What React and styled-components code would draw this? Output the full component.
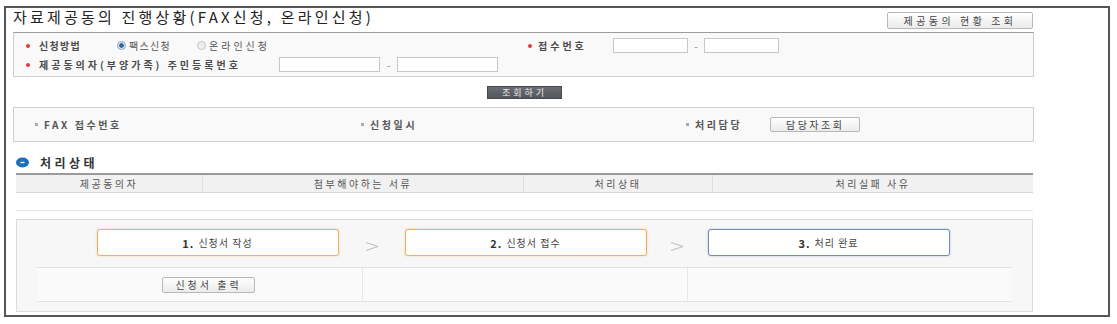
import React from 'react';
import styled, { createGlobalStyle } from 'styled-components';

const GlobalStyle = createGlobalStyle`
  html, body { margin: 0; padding: 0; background: #fff; }
  body { font-family: "Noto Sans CJK KR", "Noto Sans", sans-serif; color: #444; }
  * { box-sizing: border-box; }
`;

const Page = styled.div`
  padding: 6px 0 0 4px;
`;

const Frame = styled.div`
  width: 1106px;
  height: 311px;
  border: 2px solid #555;
  padding: 0 74px 0 7px;
  display: flex;
  flex-direction: column;
`;

const Header = styled.div`
  display: flex;
  justify-content: space-between;
  align-items: flex-start;
  height: 24px;
`;

const Title = styled.h1`
  margin: 0;
  font-size: 15px;
  font-weight: normal;
  line-height: 18px;
  letter-spacing: 3.2px;
  color: #222;
`;

const GrayButton = styled.button`
  font-family: inherit;
  height: ${p => p.$h || 16}px;
  width: ${p => p.$w}px;
  padding: 0;
  border: 1px solid #b8b8b8;
  border-radius: 2px;
  background: linear-gradient(#ffffff, #ebebeb);
  font-size: 10px;
  line-height: 1;
  letter-spacing: ${p => p.$ls ?? 2}px;
  color: #444;
  margin-top: ${p => p.$mt || 0}px;
  margin-right: ${p => p.$mr || 0}px;
  margin-left: ${p => p.$ml || 0}px;
`;

const SearchPanel = styled.div`
  height: 45px;
  border: 1px solid #cfcfcf;
  border-top-color: #9c9c9c;
  background: #f9f9f9;
  padding: 5px 0 4px 12px;
  display: flex;
  flex-direction: column;
  gap: 4px;
`;

const FormRow = styled.div`
  display: flex;
  align-items: center;
  height: 15px;
`;

const Field = styled.div`
  display: flex;
  align-items: center;
  width: ${p => (p.$w ? `${p.$w}px` : 'auto')};
`;

const Req = styled.span`
  width: 4px;
  height: 4px;
  border-radius: 50%;
  background: #e23b3b;
  margin-right: ${p => p.$gap ?? 9}px;
  flex: none;
`;

const Label = styled.span`
  font-size: 10px;
  font-weight: bold;
  color: #4a4a4a;
  letter-spacing: ${p => p.$ls ?? 1}px;
  width: ${p => p.$w}px;
  white-space: nowrap;
  flex: none;
`;

const Radio = styled.span`
  width: 9px;
  height: 9px;
  border-radius: 50%;
  border: 1px solid ${p => (p.$on ? '#8aa3bf' : '#c4c4c4')};
  background: ${p => (p.$on ? 'radial-gradient(circle, #2f63a0 0 2px, #dfe8f2 2.5px)' : '#eee')};
  margin-right: 3px;
  flex: none;
`;

const RadioText = styled.span`
  font-size: 10px;
  color: #555;
  letter-spacing: ${p => p.$ls ?? 1}px;
  margin-right: ${p => p.$mr || 0}px;
  white-space: nowrap;
`;

const Input = styled.span`
  display: block;
  width: ${p => p.$w}px;
  height: 15px;
  border: 1px solid #c6c6c6;
  background: #fff;
  flex: none;
`;

const Dash = styled.span`
  width: ${p => p.$w || 16}px;
  text-align: center;
  font-size: 10px;
  color: #888;
  flex: none;
`;

const ActionRow = styled.div`
  display: flex;
  justify-content: center;
  margin-top: 9px;
  padding-left: 2px;
`;

const DarkButton = styled.button`
  font-family: inherit;
  width: 75px;
  height: 13px;
  padding: 0;
  border: 1px solid #45484c;
  background: linear-gradient(#6a6e73, #53575c);
  color: #e9e9e9;
  font-size: 9px;
  line-height: 1;
  letter-spacing: 3px;
`;

const InfoPanel = styled.div`
  margin-top: 8px;
  height: 35px;
  border: 1px solid #cfcfcf;
  background: #f9f9f9;
  display: grid;
  grid-template-columns: 326px 325px 1fr;
  align-items: center;
  padding-left: 21px;
`;

const InfoItem = styled.div`
  display: flex;
  align-items: center;
  font-size: 10px;
  font-weight: bold;
  color: #555;
  letter-spacing: 2.6px;
  white-space: nowrap;
`;

const Dot = styled.span`
  width: 3px;
  height: 3px;
  background: #aaa;
  margin-right: 6px;
`;

const SectionTitle = styled.div`
  margin: 11px 0 0 3px;
  height: 18px;
  display: flex;
  align-items: center;
  gap: 11px;
  font-size: 12px;
  font-weight: bold;
  color: #333;
  letter-spacing: 3.5px;
`;

const Table = styled.div`
  margin: 2px 1px 0 3px;
`;

const HeadRow = styled.div`
  display: grid;
  grid-template-columns: 186px 321px 189px 1fr;
  height: 20px;
  border-top: 2px solid #9a9a9a;
  border-bottom: 1px solid #d6d6d6;
  background: #f1f1f1;
`;

const HeadCell = styled.div`
  display: flex;
  align-items: center;
  justify-content: center;
  font-size: 10px;
  color: #555;
  letter-spacing: 2.5px;
  border-left: ${p => (p.$first ? 'none' : '1px solid #dedede')};
`;

const EmptyRow = styled.div`
  height: 18px;
  border-bottom: 1px solid #e6e6e6;
`;

const StepsPanel = styled.div`
  margin: 8px 1px 0 3px;
  height: 93px;
  border: 1px solid #dcdcdc;
  background: #f7f7f7;
  padding: 9px 20px;
`;

const StepRow = styled.div`
  display: flex;
  justify-content: center;
  height: 27px;
  padding-right: 3px;
`;

const StepBox = styled.div`
  width: 242px;
  height: 27px;
  border: 1.5px solid ${p => (p.$tone === 'blue' ? '#6d8dbd' : '#f2ad5a')};
  border-radius: 3px;
  background: #fff;
  box-shadow: 0 0 2px ${p => (p.$tone === 'blue' ? 'rgba(90,120,170,0.5)' : 'rgba(240,160,70,0.5)')};
  display: flex;
  align-items: center;
  justify-content: center;
  font-size: 10px;
  color: #444;
  letter-spacing: 1px;
  b { font-size: 11px; color: #333; margin-right: 4px; }
`;

const ArrowSlot = styled.div`
  width: ${p => p.$w || 66}px;
  display: flex;
  justify-content: center;
  align-items: flex-end;
  padding-bottom: 5px;
`;

const ResultRow = styled.div`
  margin-top: 11px;
  height: 35px;
  display: grid;
  grid-template-columns: 325px 325px 1fr;
  border-top: 1px solid #e2e2e2;
  border-bottom: 1px solid #e2e2e2;
  background: #fafafa;
`;

const ResultCell = styled.div`
  display: flex;
  align-items: center;
  justify-content: center;
  border-left: ${p => (p.$first ? 'none' : '1px solid #e6e6e6')};
  padding-left: ${p => (p.$first ? 18 : 0)}px;
`;

const CircleIcon = () => (
  <svg width="13" height="11" viewBox="0 0 13 11">
    <ellipse cx="6.5" cy="5.5" rx="6.5" ry="5" fill="#1f6fb8" />
    <rect x="4.5" y="4.8" width="4" height="1.4" fill="#fff" />
  </svg>
);

const Chevron = () => (
  <svg width="14" height="9" viewBox="0 0 14 9">
    <polyline points="1,0.5 13,4.5 1,8.5" fill="none" stroke="#b9b9b9" strokeWidth="1" />
  </svg>
);

export default function App() {
  return (
    <>
      <GlobalStyle />
      <Page>
        <Frame>
          <Header>
            <Title>자료제공동의 진행상황(FAX신청, 온라인신청)</Title>
            <GrayButton $w={146} $h={17} $mt={4} $mr={1} $ls={3.5}>제공동의 현황 조회</GrayButton>
          </Header>

          <SearchPanel>
            <FormRow>
              <Field $w={502}>
                <Req />
                <Label $w={78} $ls={1.3}>신청방법</Label>
                <Radio $on />
                <RadioText $mr={26} $ls={1.3}>팩스신청</RadioText>
                <Radio />
                <RadioText $ls={3}>온라인신청</RadioText>
              </Field>
              <Field>
                <Req $gap={6} />
                <Label $w={75} $ls={3}>접수번호</Label>
                <Input $w={75} />
                <Dash>-</Dash>
                <Input $w={75} />
              </Field>
            </FormRow>
            <FormRow>
              <Field>
                <Req />
                <Label $w={240} $ls={3}>제공동의자(부양가족) 주민등록번호</Label>
                <Input $w={101} />
                <Dash $w={17}>-</Dash>
                <Input $w={101} />
              </Field>
            </FormRow>
          </SearchPanel>

          <ActionRow>
            <DarkButton>조회하기</DarkButton>
          </ActionRow>

          <InfoPanel>
            <InfoItem><Dot />FAX 접수번호</InfoItem>
            <InfoItem><Dot />신청일시</InfoItem>
            <InfoItem>
              <Dot />처리담당
              <GrayButton $w={90} $h={15} $ml={28} $ls={2.5}>담당자조회</GrayButton>
            </InfoItem>
          </InfoPanel>

          <SectionTitle>
            <CircleIcon />
            처리상태
          </SectionTitle>

          <Table>
            <HeadRow>
              <HeadCell $first>제공동의자</HeadCell>
              <HeadCell>첨부해야하는 서류</HeadCell>
              <HeadCell>처리상태</HeadCell>
              <HeadCell>처리실패 사유</HeadCell>
            </HeadRow>
            <EmptyRow />
          </Table>

          <StepsPanel>
            <StepRow>
              <StepBox><b>1.</b>신청서 작성</StepBox>
              <ArrowSlot $w={66}><Chevron /></ArrowSlot>
              <StepBox><b>2.</b>신청서 접수</StepBox>
              <ArrowSlot $w={61}><Chevron /></ArrowSlot>
              <StepBox $tone="blue"><b>3.</b>처리 완료</StepBox>
            </StepRow>
            <ResultRow>
              <ResultCell $first>
                <GrayButton $w={93} $h={16} $ls={3}>신청서 출력</GrayButton>
              </ResultCell>
              <ResultCell />
              <ResultCell />
            </ResultRow>
          </StepsPanel>
        </Frame>
      </Page>
    </>
  );
}
